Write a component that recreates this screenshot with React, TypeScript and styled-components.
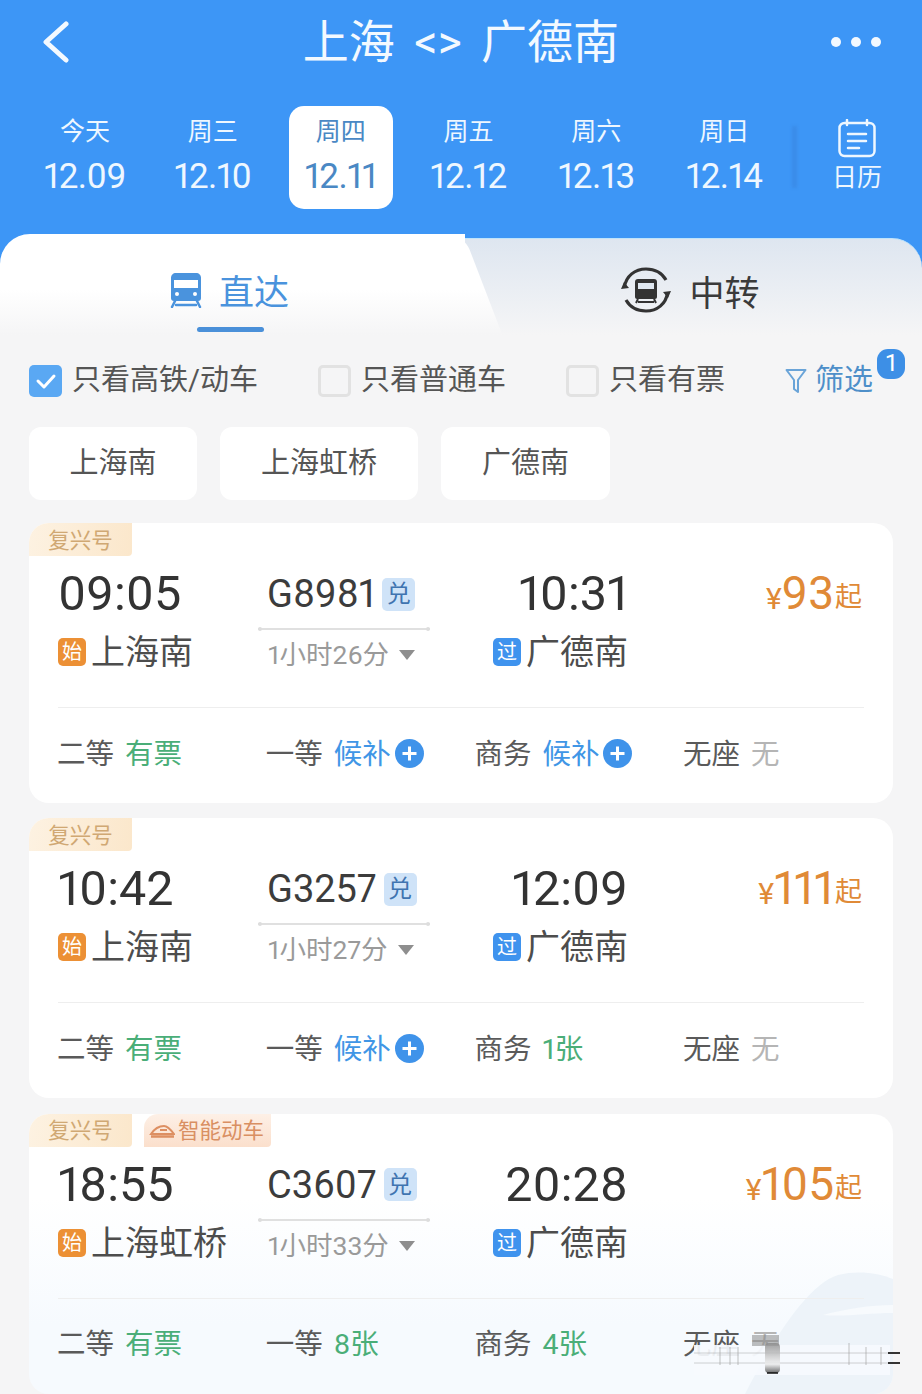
import React from 'react';
import styled, { createGlobalStyle } from 'styled-components';

const GlobalStyle = createGlobalStyle`
  html, body {
    margin: 0;
    padding: 0;
    background: #f5f5f6;
  }
  * {
    box-sizing: border-box;
  }
`;

const FONT = `Roboto, "Noto Sans CJK SC", sans-serif`;

const Page = styled.div`
  position: relative;
  width: 922px;
  height: 1394px;
  overflow: hidden;
  background: #f5f5f6;
  font-family: ${FONT};
  font-variant-numeric: proportional-nums;
  font-feature-settings: 'pnum' 1;
  color: #333;
`;

const Header = styled.header`
  height: 234px;
  background: #3d96f6;
  color: #fff;
`;

const NavBar = styled.div`
  height: 84px;
  padding: 0 40px;
  display: grid;
  grid-template-columns: 1fr auto 1fr;
  align-items: center;
`;

const NavEnd = styled.div`
  display: flex;
  justify-content: flex-end;
`;

const NavTitle = styled.h1`
  margin: 0;
  font-size: 46px;
  font-weight: 400;
  line-height: 84px;
  word-spacing: 8px;
  color: #f3f9ff;
`;

const DateRow = styled.div`
  display: flex;
  align-items: flex-start;
  margin-top: 22px;
  padding-left: 21px;
`;

const DateCell = styled.div`
  width: 128px;
  height: 103px;
  display: flex;
  justify-content: center;
`;

const DateInner = styled.div<{ $active?: boolean }>`
  width: 104px;
  height: 103px;
  display: flex;
  flex-direction: column;
  align-items: center;
  padding-top: 10px;
  border-radius: 15px;
  background: ${(p) => (p.$active ? '#fff' : 'transparent')};
  color: ${(p) => (p.$active ? '#4a88c4' : '#eef7ff')};
`;

const DayLabel = styled.div`
  font-size: 25px;
  line-height: 32px;
`;

const DayNumber = styled.div`
  margin-top: 9px;
  font-size: 35px;
  line-height: 40px;
  letter-spacing: -0.5px;
`;

const CalendarCell = styled.div`
  position: relative;
  width: 132px;
  height: 103px;
  margin-left: 2px;
  display: flex;
  flex-direction: column;
  align-items: center;
  padding: 13px 0 0 2px;
  color: #eef7ff;

  &::before {
    content: '';
    position: absolute;
    left: 2px;
    top: 20px;
    width: 5px;
    height: 62px;
    background: #3a8ce8;
    filter: blur(1.5px);
  }
`;

const CalendarLabel = styled.div`
  font-size: 25px;
  line-height: 30px;
  margin-top: 5px;
`;

const TabBar = styled.div`
  height: 101px;
  display: flex;
  background: linear-gradient(#3d96f6 0 34px, #f5f5f6 34px);
`;

const DirectTab = styled.div`
  position: relative;
  width: 465px;
  border-radius: 30px 0 0 0;
  background: linear-gradient(#fff 55%, #f5f5f6);
  z-index: 1;

  &::after {
    content: '';
    position: absolute;
    top: 0;
    right: -18px;
    width: 60px;
    height: 100%;
    border-radius: 0 16px 0 0;
    background: linear-gradient(#fff 55%, #f5f5f6);
    transform: skewX(21deg);
    z-index: -1;
  }
`;

const TabContent = styled.div<{ $active?: boolean }>`
  height: 100%;
  display: flex;
  align-items: center;
  justify-content: center;
  font-size: 35px;
  color: ${(p) => (p.$active ? '#4a93dd' : '#3a3a3a')};
`;

const DirectContent = styled(TabContent)`
  gap: 17px;
  padding: 10px 6px 0 0;
`;

const TabLine = styled.div`
  position: absolute;
  left: 197px;
  bottom: 3px;
  width: 67px;
  height: 5px;
  border-radius: 3px;
  background: #4a90d9;
`;

const TransferTab = styled.div`
  flex: 1;
  margin-top: 4px;
  border-radius: 0 30px 0 0;
  border-top: 1px solid #bfe4fb;
  background: linear-gradient(#dee6f0, #f5f5f6);
`;

const TransferContent = styled(TabContent)`
  gap: 18px;
  padding: 6px 6px 0 0;
`;

const FilterRow = styled.div`
  height: 92px;
  padding: 0 17px 0 29px;
  display: flex;
  align-items: center;
  justify-content: space-between;
`;

const FilterItem = styled.div`
  display: flex;
  align-items: center;
  gap: 10px;
  font-size: 29px;
  color: #555;
  white-space: nowrap;
`;

const FilterText = styled.span`
  padding-bottom: 8px;
`;

const CheckBox = styled.span<{ $checked?: boolean }>`
  width: 33px;
  height: 32px;
  border-radius: 5px;
  display: flex;
  align-items: center;
  justify-content: center;
  background: ${(p) => (p.$checked ? '#5aa8f3' : '#f5f5f6')};
  border: ${(p) => (p.$checked ? 'none' : '3px solid #e2e2e2')};
`;

const FilterButton = styled.div`
  position: relative;
  display: flex;
  align-items: center;
  gap: 8px;
  padding-right: 32px;
  font-size: 29px;
  color: #4e8fc9;
`;

const FilterBadge = styled.span`
  position: absolute;
  top: -7px;
  right: 0;
  width: 28px;
  height: 30px;
  border-radius: 11px;
  background: #3d8fe6;
  color: #fff;
  font-size: 24px;
  line-height: 29px;
  text-align: center;
`;

const ChipRow = styled.div`
  display: flex;
  gap: 23px;
  padding-left: 29px;
`;

const Chip = styled.div<{ $width: number }>`
  width: ${(p) => p.$width}px;
  height: 73px;
  padding-bottom: 8px;
  border-radius: 12px;
  background: #fff;
  display: flex;
  align-items: center;
  justify-content: center;
  font-size: 29px;
  color: #555;
`;

const CardList = styled.div`
  margin: 23px 29px 0;
  display: flex;
  flex-direction: column;
  gap: 15.3px;
`;

const Card = styled.section<{ $decorated?: boolean }>`
  position: relative;
  height: 280px;
  border-radius: 20px;
  overflow: hidden;
  background: ${(p) => (p.$decorated ? 'linear-gradient(#fff 30%, #f6fafe 75%)' : '#fff')};
`;

const TagRow = styled.div`
  position: relative;
  display: flex;
  gap: 12px;
  height: 34px;
`;

const Tag = styled.div<{ $smart?: boolean }>`
  height: 33px;
  padding: ${(p) => (p.$smart ? '0 6px 3px 4px' : '0 0 3px')};
  width: ${(p) => (p.$smart ? '127px' : '103px')};
  display: flex;
  align-items: center;
  justify-content: center;
  gap: 3px;
  border-radius: 14px 0 4px 0;
  font-size: 21.5px;
  white-space: nowrap;
  color: ${(p) => (p.$smart ? '#d98f62' : '#d0a873')};
  background: ${(p) =>
    p.$smart ? 'linear-gradient(#fdf0e6, #fbdfcc)' : 'linear-gradient(100deg, #fdf2e2, #fbe7cb)'};
`;

const TripGrid = styled.div`
  position: relative;
  display: grid;
  grid-template-columns: 200px 172px 198px 1fr;
  padding: 0 31px 0 29px;
  height: 150px;
`;

const TimeColumn = styled.div<{ $right?: boolean }>`
  display: flex;
  flex-direction: column;
  padding-top: 9px;
  align-items: ${(p) => (p.$right ? 'flex-end' : 'flex-start')};
`;

const TimeText = styled.div`
  font-size: 48.5px;
  line-height: 56px;
  color: #333;
`;

const Station = styled.div`
  margin-top: 12px;
  display: flex;
  align-items: center;
  gap: 5px;
  font-size: 34px;
  line-height: 36px;
  color: #4d4d4d;
  white-space: nowrap;
`;

const StationBadge = styled.span<{ $kind: 'start' | 'pass' }>`
  width: 28px;
  height: 28px;
  border-radius: 5px;
  display: flex;
  align-items: center;
  justify-content: center;
  font-size: 20px;
  color: #fff;
  background: ${(p) => (p.$kind === 'start' ? '#ec9035' : '#3f93ee')};
`;

const TrainColumn = styled.div`
  display: flex;
  flex-direction: column;
  align-items: stretch;
  padding-top: 14px;
`;

const TrainRow = styled.div`
  height: 46px;
  display: flex;
  align-items: center;
  gap: 7px;
  padding-left: 9px;
  font-size: 38px;
  line-height: 46px;
  color: #3c3c3c;
`;

const RedeemBadge = styled.span`
  width: 33px;
  height: 33px;
  border-radius: 5px;
  display: flex;
  align-items: center;
  justify-content: center;
  background: #cfe3f8;
  color: #3f74b0;
  font-size: 24px;
`;

const RouteLine = styled.div`
  position: relative;
  margin-top: 11px;
  height: 2px;
  background: #e0e0e0;

  &::before,
  &::after {
    content: '';
    position: absolute;
    top: -1px;
    width: 4px;
    height: 4px;
    border-radius: 50%;
    background: #ddd;
  }
  &::before {
    left: 0;
  }
  &::after {
    right: 0;
  }
`;

const Duration = styled.div`
  margin-top: 7px;
  padding-left: 10px;
  display: flex;
  align-items: center;
  gap: 10px;
  font-size: 26.5px;
  line-height: 36px;
  color: #9a9a9a;
  white-space: nowrap;
`;

const Caret = styled.span`
  width: 0;
  height: 0;
  border-left: 8px solid transparent;
  border-right: 8px solid transparent;
  border-top: 10px solid #8e8e8e;
`;

const PriceColumn = styled.div`
  display: flex;
  justify-content: flex-end;
  align-items: baseline;
  padding-top: 8px;
  line-height: 56px;
  color: #e08a37;
`;

const PriceSymbol = styled.span`
  font-size: 30px;
`;

const PriceValue = styled.span`
  font-size: 46px;
`;

const PriceSuffix = styled.span`
  font-size: 27px;
  margin-left: 1px;
  transform: translateY(-3px);
`;

const Divider = styled.div`
  position: relative;
  height: 1px;
  margin: 0 29px;
  background: #eeeeee;
`;

const FareRow = styled.div`
  position: relative;
  display: grid;
  grid-template-columns: repeat(4, 208.7px);
  padding: 0 0 4px 28px;
  height: 90px;
  align-items: center;
`;

const Fare = styled.div`
  display: flex;
  align-items: center;
  gap: 11px;
  font-size: 28.5px;
  color: #5a5a5a;
  white-space: nowrap;
`;

const FareState = styled.span<{ $state: 'ok' | 'wait' | 'none' }>`
  display: flex;
  align-items: center;
  gap: 4px;
  color: ${(p) => (p.$state === 'ok' ? '#4aae78' : p.$state === 'wait' ? '#4096e6' : '#b5b5b5')};
`;

const PlusIconWrap = styled.span`
  display: flex;
  margin-top: 5px;
`;

const Watermark = styled.svg`
  position: absolute;
  right: 0;
  bottom: 0;
  width: 160px;
  height: 125px;
`;

const GlitchOverlay = styled.svg`
  position: absolute;
  left: 690px;
  top: 1335px;
  width: 232px;
  height: 45px;
`;

const BackIcon = () => (
  <svg width="32" height="42" viewBox="0 0 32 42" fill="none">
    <path d="M26 3 6 21l20 18" stroke="#f3f9ff" strokeWidth="5" strokeLinecap="round" strokeLinejoin="round" />
  </svg>
);

const MoreIcon = () => (
  <svg width="52" height="12" viewBox="0 0 52 12" fill="#f3f9ff">
    <circle cx="6" cy="6" r="5" />
    <circle cx="26" cy="6" r="5" />
    <circle cx="46" cy="6" r="5" />
  </svg>
);

const CalendarIcon = () => (
  <svg width="38" height="39" viewBox="0 0 38 39" fill="none" stroke="#eef7ff" strokeWidth="2.5" strokeLinecap="round">
    <rect x="1.5" y="4" width="35" height="33" rx="5" />
    <path d="M9 1v5M29 1v5M10 15h18M10 22h18M10 29h11" />
  </svg>
);

const TrainIcon = () => (
  <svg width="32" height="36" viewBox="0 0 32 36" fill="#4a93dd">
    <path d="M6 1h20c3 0 5 2 5 5v20c0 2-1 3-3 3H4c-2 0-3-1-3-3V6c0-3 2-5 5-5Z" />
    <path d="M4 8h24v8H4z" fill="#fff" />
    <circle cx="7" cy="22" r="2" fill="#fff" />
    <circle cx="25" cy="22" r="2" fill="#fff" />
    <path d="M5 29 2 35M27 29l3 6M6 33h20" stroke="#4a93dd" strokeWidth="2.5" strokeLinecap="round" />
  </svg>
);

const TransferIcon = () => (
  <svg width="50" height="46" viewBox="0 0 50 46" fill="none">
    <path d="M3.5 20C5 9 14 2 25 2c9 0 16 4 20 11" stroke="#333" strokeWidth="3.2" />
    <path d="M46.5 26C45 37 36 44 25 44c-9 0-16-4-20-11" stroke="#333" strokeWidth="3.2" />
    <path d="m0 22 3-7 5 6zM50 24l-3 7-5-6z" fill="#333" />
    <path d="M17 12h16c2 0 3 1 3 3v15c0 1-1 2-2 2H16c-1 0-2-1-2-2V15c0-2 1-3 3-3Z" fill="#333" />
    <path d="M17 16h16v6H17z" fill="#dfe7f0" />
    <path d="m17 32-2 4M33 32l2 4M17 35h16" stroke="#333" strokeWidth="2" />
  </svg>
);

const CheckIcon = () => (
  <svg width="22" height="18" viewBox="0 0 22 18" fill="none">
    <path d="m3 9 6 6L19 4" stroke="#fff" strokeWidth="3" strokeLinecap="round" strokeLinejoin="round" />
  </svg>
);

const FunnelIcon = () => (
  <svg width="22" height="26" viewBox="0 0 22 26" fill="none" stroke="#6aa4d8" strokeWidth="2" strokeLinejoin="round">
    <path d="M1.5 2h19L13 12v12l-4-3v-9z" />
  </svg>
);

const PlusIcon = () => (
  <svg width="29" height="29" viewBox="0 0 29 29">
    <circle cx="14.5" cy="14.5" r="14.5" fill="#3f93ea" />
    <path d="M14.5 7.5v14M7.5 14.5h14" stroke="#fff" strokeWidth="3" />
  </svg>
);

const BulletTrainIcon = () => (
  <svg width="26" height="18" viewBox="0 0 26 18" fill="none" stroke="#dd8f62" strokeWidth="2">
    <path d="M2 14C6 8 11 6 15 6c4 0 7 4 10 8z" />
    <path d="M11 10h7" />
    <path d="M2 16.5h23" strokeWidth="2.5" />
  </svg>
);

type FareInfo = {
  label: string;
  value: string;
  state: 'ok' | 'wait' | 'none';
};

type Trip = {
  depart: string;
  from: string;
  no: string;
  duration: string;
  arrive: string;
  price: string;
  smart?: boolean;
  fares: FareInfo[];
};

const days = [
  { label: '今天', date: '12.09' },
  { label: '周三', date: '12.10' },
  { label: '周四', date: '12.11', active: true },
  { label: '周五', date: '12.12' },
  { label: '周六', date: '12.13' },
  { label: '周日', date: '12.14' },
];

const trips: Trip[] = [
  {
    depart: '09:05',
    from: '上海南',
    no: 'G8981',
    duration: '1小时26分',
    arrive: '10:31',
    price: '93',
    fares: [
      { label: '二等', value: '有票', state: 'ok' },
      { label: '一等', value: '候补', state: 'wait' },
      { label: '商务', value: '候补', state: 'wait' },
      { label: '无座', value: '无', state: 'none' },
    ],
  },
  {
    depart: '10:42',
    from: '上海南',
    no: 'G3257',
    duration: '1小时27分',
    arrive: '12:09',
    price: '111',
    fares: [
      { label: '二等', value: '有票', state: 'ok' },
      { label: '一等', value: '候补', state: 'wait' },
      { label: '商务', value: '1张', state: 'ok' },
      { label: '无座', value: '无', state: 'none' },
    ],
  },
  {
    depart: '18:55',
    from: '上海虹桥',
    no: 'C3607',
    duration: '1小时33分',
    arrive: '20:28',
    price: '105',
    smart: true,
    fares: [
      { label: '二等', value: '有票', state: 'ok' },
      { label: '一等', value: '8张', state: 'ok' },
      { label: '商务', value: '4张', state: 'ok' },
      { label: '无座', value: '无', state: 'none' },
    ],
  },
];

const App: React.FC = () => {
  return (
    <Page>
      <GlobalStyle />
      <Header>
        <NavBar>
          <BackIcon />
          <NavTitle>上海 &lt;&gt; 广德南</NavTitle>
          <NavEnd>
            <MoreIcon />
          </NavEnd>
        </NavBar>
        <DateRow>
          {days.map((day) => (
            <DateCell key={day.date}>
              <DateInner $active={day.active}>
                <DayLabel>{day.label}</DayLabel>
                <DayNumber>{day.date}</DayNumber>
              </DateInner>
            </DateCell>
          ))}
          <CalendarCell>
            <CalendarIcon />
            <CalendarLabel>日历</CalendarLabel>
          </CalendarCell>
        </DateRow>
      </Header>

      <TabBar>
        <DirectTab>
          <DirectContent $active>
            <TrainIcon />
            直达
          </DirectContent>
          <TabLine />
        </DirectTab>
        <TransferTab>
          <TransferContent>
            <TransferIcon />
            中转
          </TransferContent>
        </TransferTab>
      </TabBar>

      <FilterRow>
        <FilterItem>
          <CheckBox $checked>
            <CheckIcon />
          </CheckBox>
          <FilterText>只看高铁/动车</FilterText>
        </FilterItem>
        <FilterItem>
          <CheckBox />
          <FilterText>只看普通车</FilterText>
        </FilterItem>
        <FilterItem>
          <CheckBox />
          <FilterText>只看有票</FilterText>
        </FilterItem>
        <FilterButton>
          <FunnelIcon />
          <FilterText>筛选</FilterText>
          <FilterBadge>1</FilterBadge>
        </FilterButton>
      </FilterRow>

      <ChipRow>
        <Chip $width={168}>上海南</Chip>
        <Chip $width={198}>上海虹桥</Chip>
        <Chip $width={169}>广德南</Chip>
      </ChipRow>

      <CardList>
        {trips.map((trip) => (
          <Card key={trip.no} $decorated={trip.smart}>
            {trip.smart && (
              <Watermark viewBox="0 0 160 125">
                <path d="M12 125C40 70 75 15 105 6c20-5 40-2 55 4v115z" fill="#edf3f9" />
                <path d="M90 46c22-6 48-10 70-10v8c-26 0-48 4-70 2z" fill="#f7fafd" />
              </Watermark>
            )}
            <TagRow>
              <Tag>复兴号</Tag>
              {trip.smart && (
                <Tag $smart>
                  <BulletTrainIcon />
                  智能动车
                </Tag>
              )}
            </TagRow>
            <TripGrid>
              <TimeColumn>
                <TimeText>{trip.depart}</TimeText>
                <Station>
                  <StationBadge $kind="start">始</StationBadge>
                  {trip.from}
                </Station>
              </TimeColumn>
              <TrainColumn>
                <TrainRow>
                  {trip.no}
                  <RedeemBadge>兑</RedeemBadge>
                </TrainRow>
                <RouteLine />
                <Duration>
                  {trip.duration}
                  <Caret />
                </Duration>
              </TrainColumn>
              <TimeColumn $right>
                <TimeText>{trip.arrive}</TimeText>
                <Station>
                  <StationBadge $kind="pass">过</StationBadge>
                  广德南
                </Station>
              </TimeColumn>
              <PriceColumn>
                <PriceSymbol>¥</PriceSymbol>
                <PriceValue>{trip.price}</PriceValue>
                <PriceSuffix>起</PriceSuffix>
              </PriceColumn>
            </TripGrid>
            <Divider />
            <FareRow>
              {trip.fares.map((fare) => (
                <Fare key={fare.label}>
                  {fare.label}
                  <FareState $state={fare.state}>
                    {fare.value}
                    {fare.state === 'wait' && (
                      <PlusIconWrap>
                        <PlusIcon />
                      </PlusIconWrap>
                    )}
                  </FareState>
                </Fare>
              ))}
            </FareRow>
          </Card>
        ))}
      </CardList>

      {/* smeared pixels along the bottom edge of the capture */}
      <GlitchOverlay viewBox="0 0 232 45">
        <defs>
          <linearGradient id="smear" x1="0" y1="0" x2="0" y2="1">
            <stop offset="0" stopColor="#888" />
            <stop offset="0.7" stopColor="#eee" />
            <stop offset="1" stopColor="#444" />
          </linearGradient>
        </defs>
        <rect x="4" y="10" width="196" height="30" fill="#f6fafe" opacity="0.92" />
        <path d="M4 18h206M4 28h206" stroke="#9a9a9a" strokeWidth="1" opacity="0.45" />
        <path d="M198 18h12M198 28h12" stroke="#333" strokeWidth="2" />
        <rect x="62" y="0" width="27" height="11" fill="#888" opacity="0.55" />
        <rect x="75" y="8" width="15" height="30" rx="4" fill="url(#smear)" opacity="0.8" />
        <path d="M77 38h11" stroke="#111" strokeWidth="1.5" />
        <path d="M30 12v18M40 12v18M48 12v18M159 8v22M176 12v18M191 12v18" stroke="#999" strokeWidth="1.5" opacity="0.4" />
      </GlitchOverlay>
    </Page>
  );
};

export default App;
